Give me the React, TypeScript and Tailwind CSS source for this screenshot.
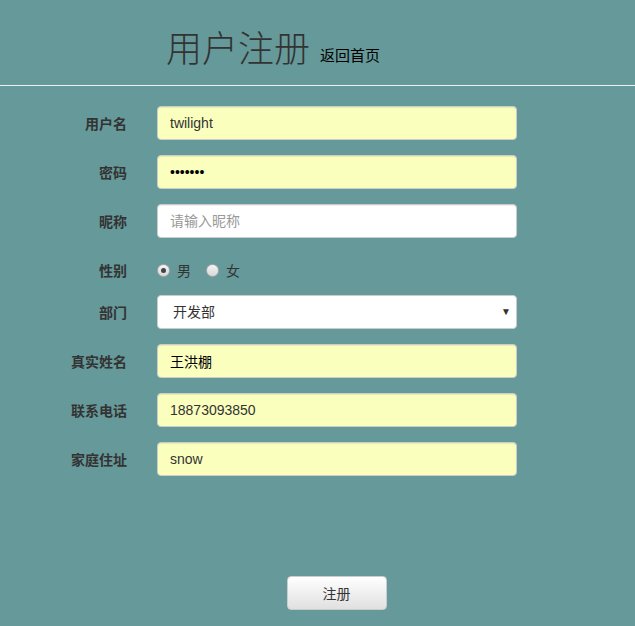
import React from "react";

const font = "font-['Arial','Liberation_Sans','Noto_Sans_CJK_SC',sans-serif]";

function Row({ label, children }: { label: string; children: React.ReactNode }) {
  return (
    <div className="flex items-center">
      <label className="w-[127px] text-right text-[14px] font-bold text-[#333] font-['Noto_Sans_CJK_SC',sans-serif] leading-[20px]">
        {label}
      </label>
      <div className="ml-[30px] w-[360px]">{children}</div>
    </div>
  );
}

function TextInput({ value, placeholder, type = "text", yellow = true, dark = false }: { value?: string; placeholder?: string; type?: string; yellow?: boolean; dark?: boolean }) {
  return (
    <input
      type={type}
      readOnly
      value={value ?? ""}
      placeholder={placeholder}
      className={`block h-[34px] w-full rounded-[4px] border border-[#ccc] px-[12px] text-[14px] outline-none placeholder:text-[#999] shadow-[inset_0_1px_1px_rgba(0,0,0,0.075)] ${font} ${
        yellow ? "bg-[#faffbd]" : "bg-white"
      } ${dark ? "text-black" : "text-[#333]"}`}
    />
  );
}

function Radio({ checked, label }: { checked?: boolean; label: string }) {
  return (
    <span className="flex items-center">
      <span className="flex h-[13px] w-[13px] items-center justify-center rounded-full border border-[#aaa] bg-gradient-to-b from-[#f4f4f4] to-[#d8d8d8]">
        {checked && <span className="h-[5px] w-[5px] rounded-full bg-[#444]" />}
      </span>
      <span className="ml-[7px] text-[14px] text-[#333] font-['Noto_Sans_CJK_SC',sans-serif]">{label}</span>
    </span>
  );
}

export default function App() {
  return (
    <div className="min-h-[626px] w-full bg-[#669999] overflow-hidden">
      <div className="flex items-end pl-[166px] pt-[22px] h-[86px] border-b border-[#eee] pb-[18px]">
        <h1 className="text-[36px] leading-[42px] font-light text-[#333] font-['Noto_Sans_CJK_SC',sans-serif]">用户注册</h1>
        <a className="ml-[10px] mb-[2px] text-[15px] leading-[20px] text-black font-['Noto_Sans_CJK_SC',sans-serif]">返回首页</a>
      </div>
      <div className="flex flex-col pt-[20px]">
        <div className="flex flex-col gap-[15px]">
          <Row label="用户名"><TextInput value="twilight" /></Row>
          <Row label="密码"><TextInput value="1234567" type="password" dark /></Row>
          <Row label="昵称"><TextInput placeholder="请输入昵称" yellow={false} /></Row>
        </div>
        <div className="mt-[15px]">
          <Row label="性别">
            <div className="flex h-[34px] items-center gap-[15px]">
              <Radio checked label="男" />
              <Radio label="女" />
            </div>
          </Row>
        </div>
        <div className="mt-[8px] flex flex-col gap-[15px]">
          <Row label="部门">
            <div className="relative">
              <select
                defaultValue="dev"
                className={`block h-[34px] w-full appearance-none rounded-[4px] border border-[#ccc] bg-white pl-[15px] text-[14px] text-[#333] outline-none ${font}`}
              >
                <option value="dev">开发部</option>
              </select>
              <span className="pointer-events-none absolute right-[6px] top-[9px] text-[10px] text-[#333]">▼</span>
            </div>
          </Row>
          <Row label="真实姓名"><TextInput value="王洪棚" dark /></Row>
          <Row label="联系电话"><TextInput value="18873093850" /></Row>
          <Row label="家庭住址"><TextInput value="snow" /></Row>
        </div>
        <div className="mt-[100px] flex justify-center pl-[38px]">
          <button className="h-[34px] w-[100px] rounded-[4px] border border-[#ccc] bg-gradient-to-b from-white to-[#e0e0e0] text-[14px] text-[#333] font-['Noto_Sans_CJK_SC',sans-serif]">
            注册
          </button>
        </div>
      </div>
    </div>
  );
}
